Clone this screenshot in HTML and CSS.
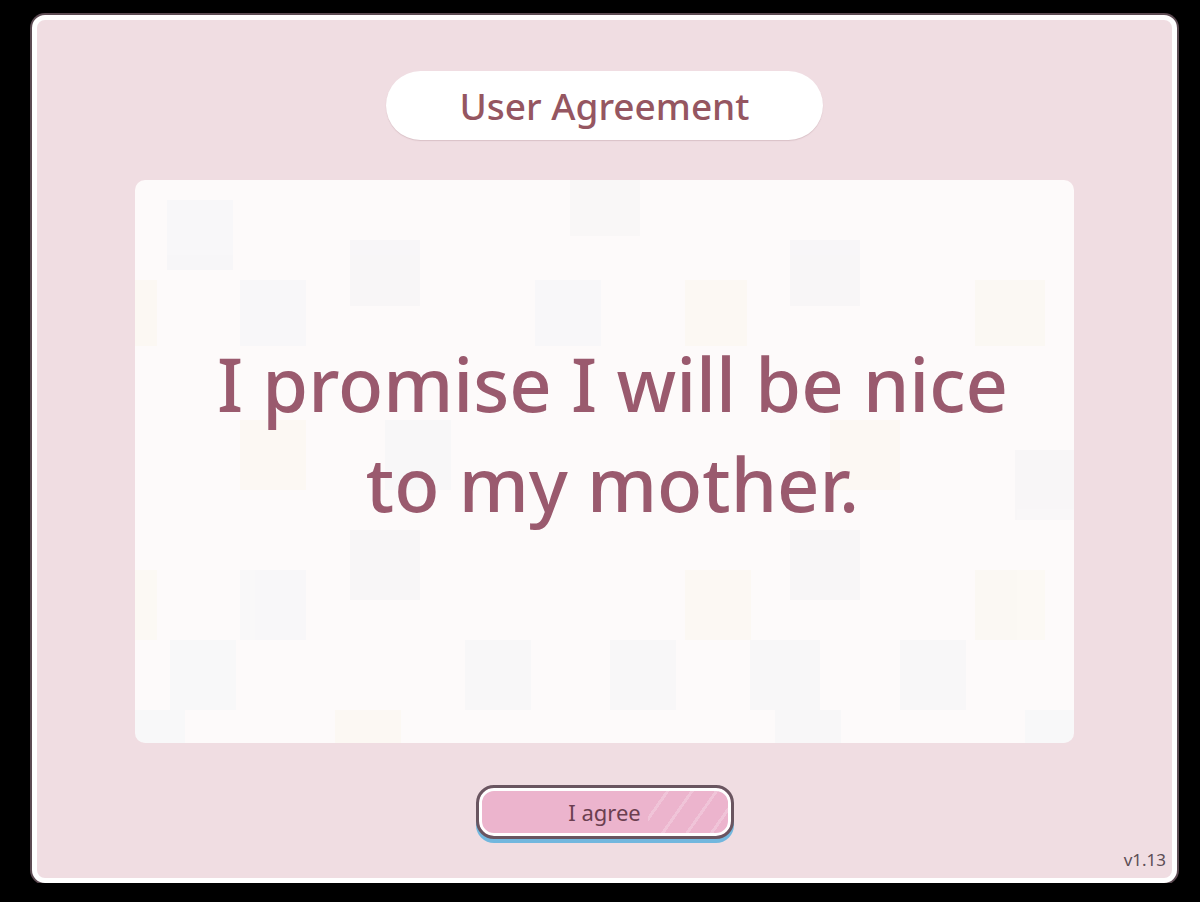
FILE: index.html
```html
<!DOCTYPE html>
<html lang="en">
<head>
    <meta charset="UTF-8">
    <title>User Agreement</title>
    <link rel="stylesheet" href="styles.css">
</head>
<body>
    <div class="panel">
        <div class="title-pill">User Agreement</div>

        <div class="card">
            <!-- soft tiled backdrop -->
            <svg class="tiles" viewBox="0 0 939 563" preserveAspectRatio="none">
                <rect x="32" y="20" width="66" height="70" fill="#e3e8f2"/>
                <rect x="215" y="60" width="70" height="66" fill="#e6e7ee"/>
                <rect x="435" y="0" width="70" height="56" fill="#eceaea"/>
                <rect x="550" y="100" width="62" height="66" fill="#fbf1d8"/>
                <rect x="655" y="60" width="70" height="66" fill="#e6e7ef"/>
                <rect x="840" y="100" width="70" height="66" fill="#f8f2da"/>
                <rect x="105" y="100" width="66" height="66" fill="#e8eef6"/>
                <rect x="400" y="100" width="66" height="66" fill="#e8eef6"/>
                <rect x="0" y="100" width="22" height="66" fill="#fbf2dc"/>
                <rect x="105" y="240" width="66" height="70" fill="#fbf2dc"/>
                <rect x="250" y="240" width="66" height="70" fill="#e6ecf5"/>
                <rect x="695" y="240" width="70" height="70" fill="#fbf2dc"/>
                <rect x="880" y="270" width="59" height="70" fill="#e8e8ee"/>
                <rect x="215" y="350" width="70" height="70" fill="#e6e7ee"/>
                <rect x="655" y="350" width="70" height="70" fill="#e6e7ee"/>
                <rect x="550" y="390" width="66" height="70" fill="#fbf2dc"/>
                <rect x="840" y="390" width="70" height="70" fill="#f8f2da"/>
                <rect x="105" y="390" width="66" height="70" fill="#e8eef6"/>
                <rect x="0" y="390" width="22" height="70" fill="#fbf2dc"/>
                <rect x="35" y="460" width="66" height="70" fill="#e6edf5"/>
                <rect x="330" y="460" width="66" height="70" fill="#e6edf5"/>
                <rect x="475" y="460" width="66" height="70" fill="#e6edf5"/>
                <rect x="615" y="460" width="70" height="70" fill="#e6edf5"/>
                <rect x="765" y="460" width="66" height="70" fill="#e6edf5"/>
                <rect x="0" y="530" width="50" height="33" fill="#e6edf5"/>
                <rect x="200" y="530" width="66" height="33" fill="#fbf2dc"/>
                <rect x="640" y="530" width="66" height="33" fill="#e6edf5"/>
                <rect x="890" y="530" width="49" height="33" fill="#e6edf5"/>
            </svg>
            <p class="promise">I promise I will be nice<br>to my mother.</p>
        </div>

        <button class="agree-btn">I agree</button>

        <span class="version">v1.13</span>
    </div>
</body>
</html>
```

FILE: styles.css
```css
/* agreement screen */
body {
    margin: 0;
    background-color: #000000;
    font-family: "Noto Sans", "Open Sans", sans-serif;
}
.panel {
    position: relative;
    box-sizing: border-box;
    width: 1145px;
    height: 868px;
    margin: 15px 0 0 32px;
    padding-top: 51px;
    border: 5px solid #ffffff;
    border-radius: 13px;
    box-shadow: 0 0 0 2px #5c4a52;
    background-color: #f0dde2;
    display: flex;
    flex-direction: column;
    align-items: center;
}
.title-pill {
    box-sizing: border-box;
    width: 437px;
    height: 69px;
    border-radius: 35px;
    background-color: #ffffff;
    box-shadow: 0 1px 1px rgba(150, 110, 120, 0.25);
    color: #955661;
    font-size: 37px;
    font-weight: 500;
    line-height: 69px;
    text-align: center;
}
.card {
    position: relative;
    box-sizing: border-box;
    width: 939px;
    height: 563px;
    margin-top: 40px;
    padding: 0 0 55px 16px;
    border-radius: 10px;
    background-color: #fdfafa;
    overflow: hidden;
    display: flex;
    align-items: center;
    justify-content: center;
}
.tiles {
    position: absolute;
    left: 0;
    top: 0;
    width: 100%;
    height: 100%;
    opacity: 0.2;
}
.promise {
    position: relative;
    margin: 0;
    color: #9a5a6e;
    font-size: 74px;
    font-weight: 500;
    line-height: 100px;
    text-align: center;
}
.agree-btn {
    position: relative;
    box-sizing: border-box;
    width: 258px;
    height: 54px;
    margin-top: 42px;
    padding: 0;
    border: 3px solid #6a5560;
    border-radius: 18px;
    box-shadow: inset 0 0 0 3px #ffffff, 0 4px 0 #72b7de;
    background-color: #ecb4cd;
    color: #6b3f50;
    font-family: "Noto Sans", "Open Sans", sans-serif;
    font-size: 22px;
    cursor: pointer;
    overflow: hidden;
}
.agree-btn::after {
    content: "";
    position: absolute;
    right: 3px;
    top: 3px;
    bottom: 3px;
    width: 80px;
    border-radius: 0 13px 13px 0;
    background: repeating-linear-gradient(-55deg,
        transparent 0 12px,
        rgba(255, 255, 255, 0.22) 12px 15px,
        transparent 15px 20px);
}
.version {
    position: absolute;
    right: 6px;
    bottom: 7px;
    color: #5c4d55;
    font-size: 17px;
}
```
